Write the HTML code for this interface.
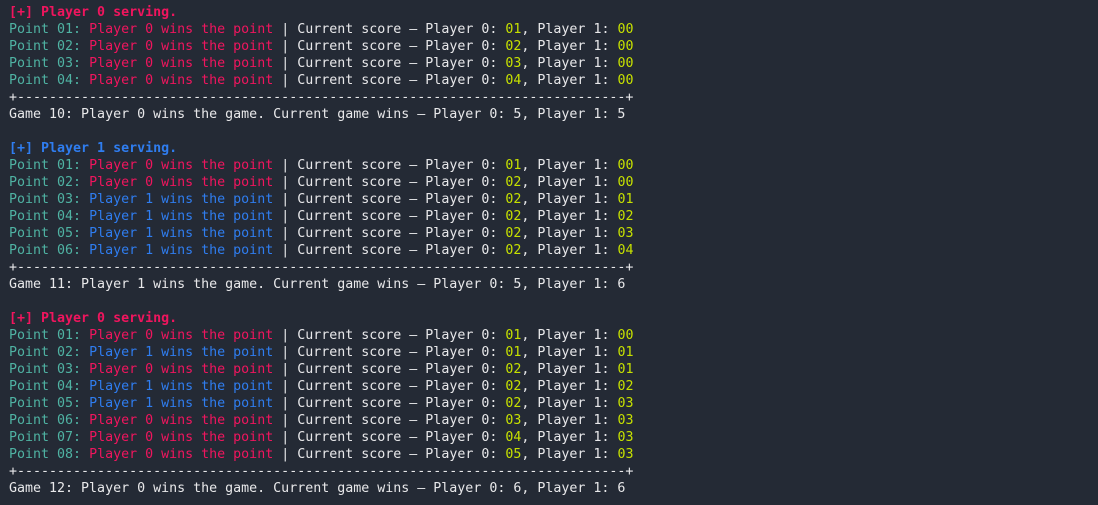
<!DOCTYPE html>
<html><head><meta charset="utf-8"><style>
html,body{margin:0;padding:0;width:1098px;height:505px;overflow:hidden;background:#242a35;}
pre{margin:0;padding:4px 0 0 9px;font-family:"DejaVu Sans Mono","Liberation Mono",monospace;font-size:13.3px;line-height:17px;color:#e8e8ea;}
.t{color:#4fb3a3}.r{color:#f0155e}.b{color:#2f7df0}.y{color:#c6e000}.h{font-weight:bold}
</style></head><body><pre><span class="r h">[+] Player 0 serving.</span>
<span class="t">Point 01:</span> <span class="r">Player 0 wins the point</span> | Current score – Player 0: <span class="y">01</span>, Player 1: <span class="y">00</span>
<span class="t">Point 02:</span> <span class="r">Player 0 wins the point</span> | Current score – Player 0: <span class="y">02</span>, Player 1: <span class="y">00</span>
<span class="t">Point 03:</span> <span class="r">Player 0 wins the point</span> | Current score – Player 0: <span class="y">03</span>, Player 1: <span class="y">00</span>
<span class="t">Point 04:</span> <span class="r">Player 0 wins the point</span> | Current score – Player 0: <span class="y">04</span>, Player 1: <span class="y">00</span>
+----------------------------------------------------------------------------+
Game 10: Player 0 wins the game. Current game wins – Player 0: 5, Player 1: 5

<span class="b h">[+] Player 1 serving.</span>
<span class="t">Point 01:</span> <span class="r">Player 0 wins the point</span> | Current score – Player 0: <span class="y">01</span>, Player 1: <span class="y">00</span>
<span class="t">Point 02:</span> <span class="r">Player 0 wins the point</span> | Current score – Player 0: <span class="y">02</span>, Player 1: <span class="y">00</span>
<span class="t">Point 03:</span> <span class="b">Player 1 wins the point</span> | Current score – Player 0: <span class="y">02</span>, Player 1: <span class="y">01</span>
<span class="t">Point 04:</span> <span class="b">Player 1 wins the point</span> | Current score – Player 0: <span class="y">02</span>, Player 1: <span class="y">02</span>
<span class="t">Point 05:</span> <span class="b">Player 1 wins the point</span> | Current score – Player 0: <span class="y">02</span>, Player 1: <span class="y">03</span>
<span class="t">Point 06:</span> <span class="b">Player 1 wins the point</span> | Current score – Player 0: <span class="y">02</span>, Player 1: <span class="y">04</span>
+----------------------------------------------------------------------------+
Game 11: Player 1 wins the game. Current game wins – Player 0: 5, Player 1: 6

<span class="r h">[+] Player 0 serving.</span>
<span class="t">Point 01:</span> <span class="r">Player 0 wins the point</span> | Current score – Player 0: <span class="y">01</span>, Player 1: <span class="y">00</span>
<span class="t">Point 02:</span> <span class="b">Player 1 wins the point</span> | Current score – Player 0: <span class="y">01</span>, Player 1: <span class="y">01</span>
<span class="t">Point 03:</span> <span class="r">Player 0 wins the point</span> | Current score – Player 0: <span class="y">02</span>, Player 1: <span class="y">01</span>
<span class="t">Point 04:</span> <span class="b">Player 1 wins the point</span> | Current score – Player 0: <span class="y">02</span>, Player 1: <span class="y">02</span>
<span class="t">Point 05:</span> <span class="b">Player 1 wins the point</span> | Current score – Player 0: <span class="y">02</span>, Player 1: <span class="y">03</span>
<span class="t">Point 06:</span> <span class="r">Player 0 wins the point</span> | Current score – Player 0: <span class="y">03</span>, Player 1: <span class="y">03</span>
<span class="t">Point 07:</span> <span class="r">Player 0 wins the point</span> | Current score – Player 0: <span class="y">04</span>, Player 1: <span class="y">03</span>
<span class="t">Point 08:</span> <span class="r">Player 0 wins the point</span> | Current score – Player 0: <span class="y">05</span>, Player 1: <span class="y">03</span>
+----------------------------------------------------------------------------+
Game 12: Player 0 wins the game. Current game wins – Player 0: 6, Player 1: 6</pre></body></html>
